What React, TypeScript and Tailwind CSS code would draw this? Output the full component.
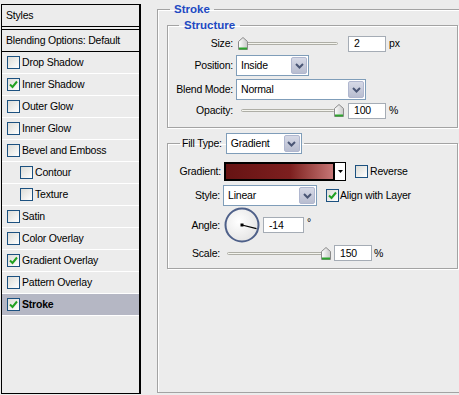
import React from "react";

type StyleRow = { name: string; on?: boolean; sub?: boolean; active?: boolean };

const styleRows: StyleRow[] = [
  { name: "Drop Shadow" },
  { name: "Inner Shadow", on: true },
  { name: "Outer Glow" },
  { name: "Inner Glow" },
  { name: "Bevel and Emboss" },
  { name: "Contour", sub: true },
  { name: "Texture", sub: true },
  { name: "Satin" },
  { name: "Color Overlay" },
  { name: "Gradient Overlay", on: true },
  { name: "Pattern Overlay" },
  { name: "Stroke", on: true, active: true },
];

function Check({ on = false }: { on?: boolean }) {
  return (
    <span className="w-[13px] h-[13px] shrink-0 border border-[#1c5180] bg-linear-to-br from-[#dcdcd7] to-white flex items-center justify-center">
      {on && (
        <svg width="9" height="9" viewBox="0 0 9 9">
          <path d="M1 4.5 L3.5 7 L8 1.5" stroke="#21a121" strokeWidth="2" fill="none" />
        </svg>
      )}
    </span>
  );
}

function Arrow() {
  return (
    <span className="w-[16px] h-[17px] shrink-0 rounded-[2px] bg-linear-to-b from-[#d6d9e6] to-[#b8bdd0] border border-[#b0b7cf] flex items-center justify-center">
      <svg width="9" height="6" viewBox="0 0 9 6">
        <path d="M1 1 L4.5 4.5 L8 1" stroke="#4a5675" strokeWidth="2" fill="none" />
      </svg>
    </span>
  );
}

function Select({ value, className }: { value: string; className: string }) {
  return (
    <div className={`${className} h-[21px] shrink-0 border border-[#7f9db9] bg-white flex items-center pl-[4px] pr-[1px]`}>
      <span className="flex-1">{value}</span>
      <Arrow />
    </div>
  );
}

function Field({ value, className }: { value: string; className: string }) {
  return (
    <div className={`${className} h-[16px] shrink-0 border border-[#a5acb5] bg-white flex items-center pl-[5px]`}>
      {value}
    </div>
  );
}

function Thumb() {
  return (
    <svg width="10" height="13" viewBox="0 0 10 13">
      <defs>
        <linearGradient id="th" x1="0" y1="0" x2="1" y2="0">
          <stop offset="0" stopColor="#ffffff" />
          <stop offset="1" stopColor="#c9c9c9" />
        </linearGradient>
      </defs>
      <path d="M5 0.5 L9.5 4.5 L9.5 12.5 L0.5 12.5 L0.5 4.5 Z" fill="url(#th)" stroke="#8a8a8a" />
      <rect x="1" y="10.5" width="8" height="2" fill="#2ea42e" />
    </svg>
  );
}

function Slider({ className, trackClass, thumbClass }: { className: string; trackClass: string; thumbClass: string }) {
  return (
    <div className={`${className} relative h-[17px] shrink-0`}>
      <div className={`${trackClass} absolute top-[7px] h-[3px] border border-[#aeaea6] bg-[#f4f4ee] rounded-full`} />
      <div className={`${thumbClass} absolute top-[2px]`}>
        <Thumb />
      </div>
    </div>
  );
}

export default function App() {
  return (
    <div className="w-[459px] h-[395px] overflow-hidden bg-[#ececec] flex font-['Liberation_Sans',Arial,sans-serif] text-[10.5px] tracking-[-0.2px] leading-[13px] text-black">
      {/* styles list */}
      <div className="ml-[1px] mt-[4px] w-[140px] h-[390px] shrink-0 border border-r-2 border-black flex flex-col">
        <div className="h-[21px] flex items-center pl-[4px]">Styles</div>
        <div className="h-[4px] border-y border-black" />
        <div className="h-[22px] flex items-center pl-[4px] border-b border-black">Blending Options: Default</div>
        {styleRows.map((r) => (
          <div
            key={r.name}
            className={`h-[22px] flex items-center gap-[2px] border-b border-white ${r.sub ? "pl-[18px]" : "pl-[5px]"} ${r.active ? "bg-[#b5b7c4] font-bold" : ""}`}
          >
            <Check on={r.on} />
            <span>{r.name}</span>
          </div>
        ))}
      </div>

      {/* stroke group */}
      <fieldset className="ml-[16px] mt-[3px] w-[320px] h-[390px] shrink-0 border border-[#a3a3a3] shadow-[inset_1px_1px_0_#fff]">
        <legend className="ml-[12px] px-[4px] font-bold text-[11.5px] tracking-normal text-[#2149c2]">Stroke</legend>
        <div className="pl-[9px] flex flex-col">
          <fieldset className="mt-[3px] w-[291px] h-[109px] border border-[#a3a3a3] shadow-[inset_1px_1px_0_#fff,1px_1px_0_#fff] flex flex-col">
            <legend className="ml-[11px] px-[5px] font-bold text-[11.5px] tracking-normal text-[#2149c2]">Structure</legend>
            <div className="mt-[3px] h-[17px] flex items-center">
              <span className="w-[65px] text-right">Size:</span>
              <Slider className="ml-[3px] w-[102px]" trackClass="left-[2px] right-0" thumbClass="left-[2px]" />
              <Field value="2" className="ml-[10px] w-[38px]" />
              <span className="ml-[3px]">px</span>
            </div>
            <div className="mt-[3px] h-[21px] flex items-center">
              <span className="w-[65px] text-right">Position:</span>
              <Select value="Inside" className="ml-[3px] w-[73px]" />
            </div>
            <div className="mt-[3px] h-[21px] flex items-center">
              <span className="w-[65px] text-right">Blend Mode:</span>
              <Select value="Normal" className="ml-[3px] w-[130px]" />
            </div>
            <div className="mt-[2px] h-[17px] flex items-center">
              <span className="w-[65px] text-right">Opacity:</span>
              <Slider className="ml-[3px] w-[108px]" trackClass="left-[5px] right-[9px]" thumbClass="left-[98px]" />
              <Field value="100" className="ml-[4px] w-[38px]" />
              <span className="ml-[3px]">%</span>
            </div>
          </fieldset>

          <fieldset className="mt-[5px] w-[291px] h-[136px] border border-[#a3a3a3] shadow-[inset_1px_1px_0_#fff,1px_1px_0_#fff] flex flex-col">
            <legend className="ml-[12px] px-[2px] flex items-center">
              <span>Fill Type:</span>
              <Select value="Gradient" className="ml-[4px] w-[76px]" />
            </legend>
            <div className="mt-[8px] h-[19px] flex items-center">
              <span className="w-[53px] text-right">Gradient:</span>
              <div className="ml-[3px] w-[122px] h-[19px] shrink-0 flex">
                <div className="flex-1 border-2 border-black bg-linear-to-r from-[#661313] via-[#7d1f1f] via-60% to-[#c67676]" />
                <div className="w-[11px] border-y border-r border-black bg-white flex items-center justify-center">
                  <svg width="5" height="3" viewBox="0 0 5 3">
                    <path d="M0 0 L5 0 L2.5 3 Z" fill="#000" />
                  </svg>
                </div>
              </div>
              <span className="ml-[9px]">
                <Check />
              </span>
              <span className="ml-[2px]">Reverse</span>
            </div>
            <div className="mt-[4px] h-[21px] flex items-center">
              <span className="w-[52px] text-right">Style:</span>
              <Select value="Linear" className="ml-[3px] w-[94px]" />
              <span className="ml-[9px]">
                <Check on />
              </span>
              <span className="ml-[1px]">Align with Layer</span>
            </div>
            <div className="mt-[1px] h-[36px] flex items-center">
              <span className="w-[52px] text-right">Angle:</span>
              <svg className="ml-[4px] shrink-0" width="36" height="36" viewBox="0 0 36 36">
                <defs>
                  <radialGradient id="dial" cx="0.4" cy="0.4" r="0.7">
                    <stop offset="0" stopColor="#ffffff" />
                    <stop offset="1" stopColor="#e2e2e2" />
                  </radialGradient>
                </defs>
                <circle cx="18" cy="18" r="16.5" fill="url(#dial)" stroke="#4e6089" strokeWidth="2" />
                <rect x="16.5" y="16.5" width="3" height="3" fill="#000" />
                <path d="M18 18 L32.5 21.6" stroke="#000" strokeWidth="1.2" />
              </svg>
              <Field value="-14" className="ml-[3px] w-[41px]" />
              <span className="ml-[3px] self-start mt-[9px]">°</span>
            </div>
            <div className="mt-[2px] h-[16px] flex items-center">
              <span className="w-[52px] text-right">Scale:</span>
              <Slider className="ml-[7px] w-[104px]" trackClass="left-0 right-0" thumbClass="left-[94px]" />
              <Field value="150" className="ml-[3px] w-[38px]" />
              <span className="ml-[2px]">%</span>
            </div>
          </fieldset>
        </div>
      </fieldset>
    </div>
  );
}
